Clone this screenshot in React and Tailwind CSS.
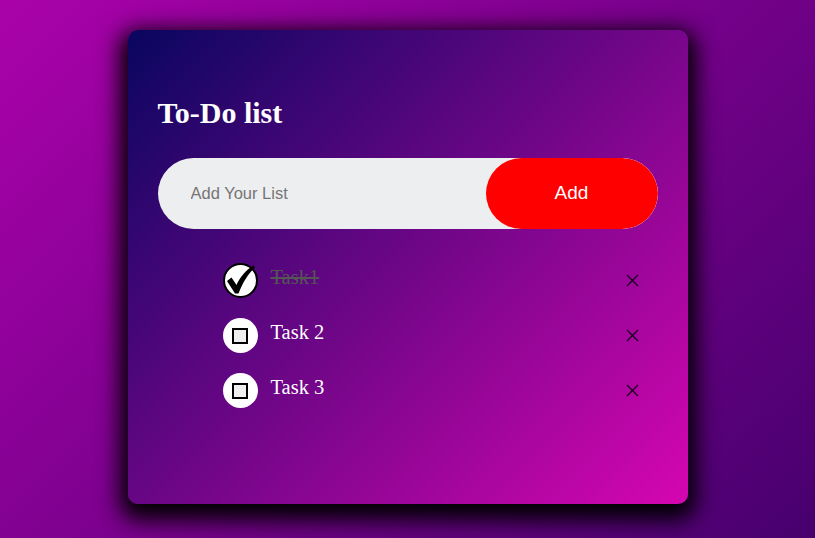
import React, { useState } from "react";

const initialTasks = [
  { id: 1, text: "Task1", done: true },
  { id: 2, text: "Task 2", done: false },
  { id: 3, text: "Task 3", done: false },
];

const CheckCircle = ({ done }) =>
  done ? (
    <div className="relative w-[35px] h-[35px] shrink-0 rounded-full bg-white border-2 border-black">
      <svg
        className="absolute -left-[2px] -top-[2px]"
        width="35"
        height="35"
        viewBox="0 0 35 35"
      >
        <path
          d="M4 18 L8.5 14.5 L13.5 22 C17 14 23 7 30.5 2.5 L32 4.5 C25 11 19.5 20 15.5 30.5 L12 30.5 Z"
          fill="#000"
        />
      </svg>
    </div>
  ) : (
    <div className="w-[35px] h-[35px] shrink-0 rounded-full bg-white flex items-center justify-center">
      <div className="w-[16px] h-[16px] border-2 border-black bg-[#f0f0f0]" />
    </div>
  );

const App = () => {
  const [tasks, setTasks] = useState(initialTasks);
  const [value, setValue] = useState("");

  const addTask = () => {
    if (!value.trim()) return;
    setTasks([...tasks, { id: Date.now(), text: value, done: false }]);
    setValue("");
  };

  const toggle = (id) =>
    setTasks(tasks.map((t) => (t.id === id ? { ...t, done: !t.done } : t)));

  const remove = (id) => setTasks(tasks.filter((t) => t.id !== id));

  return (
    <div className="w-full h-screen min-h-[538px] overflow-hidden bg-[linear-gradient(135deg,#aa02aa,#47006e)] pt-[30px]">
      <div className="mx-auto w-[560px] h-[474px] rounded-[10px] bg-[linear-gradient(135deg,#09065f,#d606b1)] shadow-[0_8px_22px_8px_#000] px-[30px] pt-[68px]">
        {/* Title */}
        <h2 className="text-white text-[30px] leading-[29px] font-bold font-['Liberation_Serif',serif]">
          To-Do list
        </h2>

        {/* Input row */}
        <div className="mt-[31px] flex h-[71px] rounded-full bg-[#edeef0] overflow-hidden">
          <input
            type="text"
            value={value}
            onChange={(e) => setValue(e.target.value)}
            placeholder="Add Your List"
            className="flex-1 min-w-0 bg-transparent pl-[33px] text-[16.5px] text-[#333] placeholder:text-[#757575] font-['Liberation_Sans',sans-serif] outline-none"
          />
          <button
            onClick={addTask}
            className="w-[172px] h-full rounded-full bg-[#ff0000] text-white text-[19px] font-['Liberation_Sans',sans-serif]"
          >
            Add
          </button>
        </div>

        {/* Tasks */}
        <ul className="mt-[24px] pl-[65px] pr-[19px]">
          {tasks.map((t) => (
            <li
              key={t.id}
              className="flex items-start h-[55px] pt-[10px] cursor-pointer"
              onClick={() => toggle(t.id)}
            >
              <CheckCircle done={t.done} />
              <span
                className={`ml-[13px] mt-[2px] flex-1 text-[20.5px] leading-[24px] font-['Liberation_Serif',serif] ${
                  t.done ? "line-through text-[#555]" : "text-white"
                }`}
              >
                {t.text}
              </span>
              <button
                onClick={(e) => {
                  e.stopPropagation();
                  remove(t.id);
                }}
                className="mt-[11px] w-[13px] h-[13px] flex items-center justify-center"
              >
                <svg width="13" height="13" viewBox="0 0 13 13">
                  <path
                    d="M1 1 L12 12 M12 1 L1 12"
                    stroke="#1a0020"
                    strokeWidth="1.4"
                    fill="none"
                  />
                </svg>
              </button>
            </li>
          ))}
        </ul>
      </div>
    </div>
  );
};

export default App;
